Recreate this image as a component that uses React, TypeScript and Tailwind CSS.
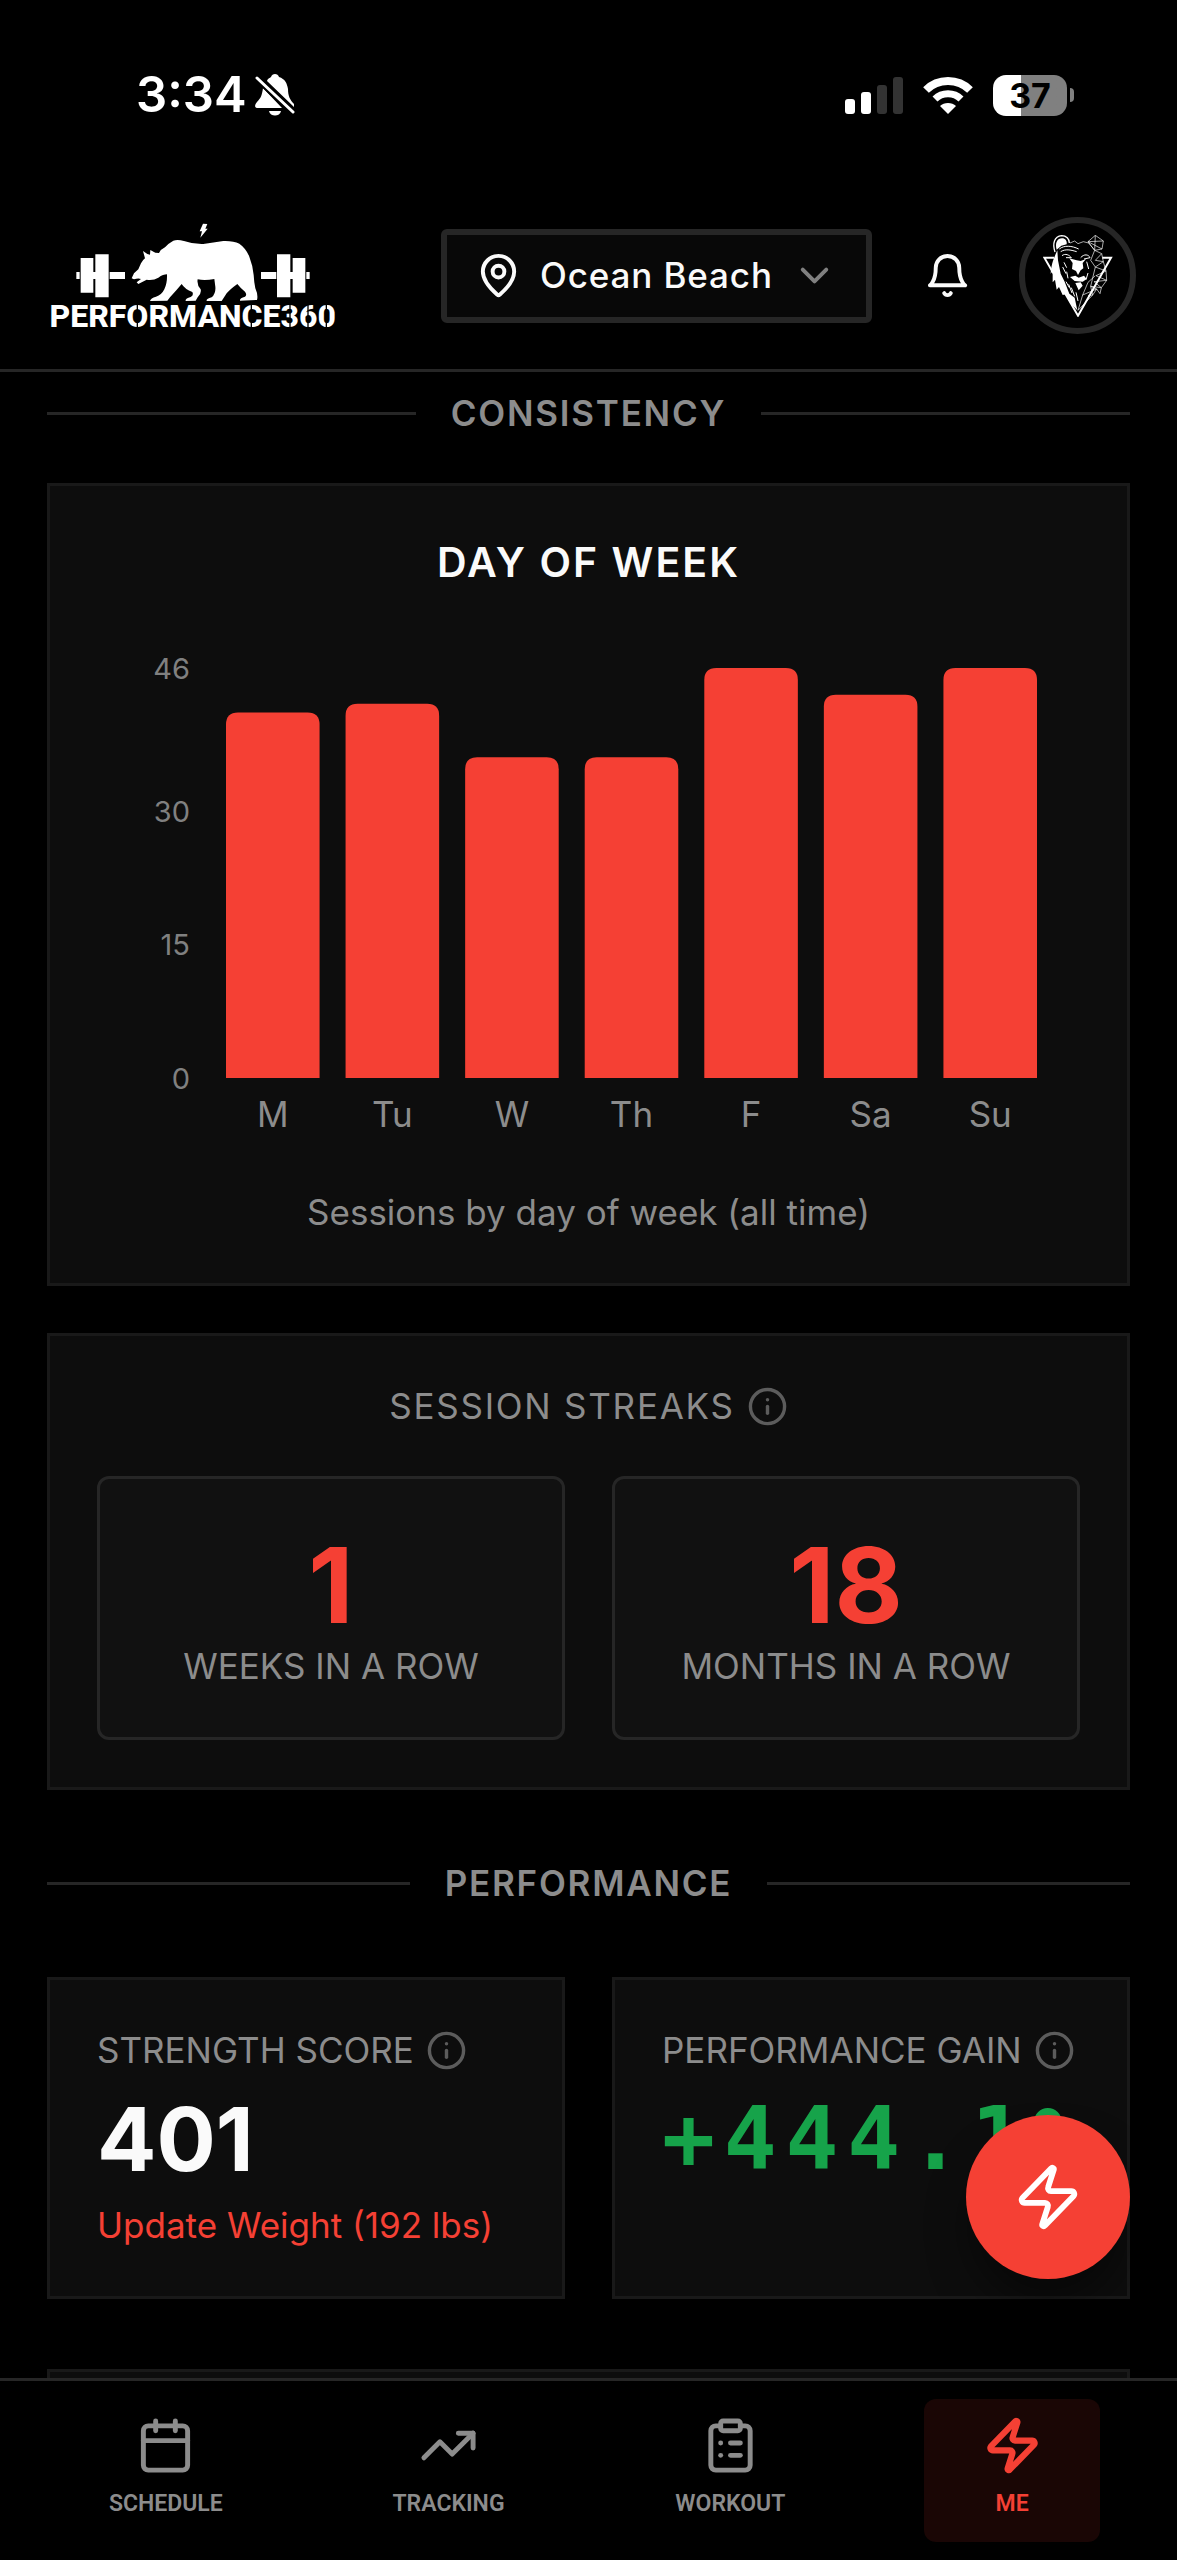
import React from 'react';
import { Calendar, ChevronDown, ClipboardList, Info, MapPin, TrendingUp, Zap } from 'lucide-react';

const sessionsByDay = [
  { day: 'M', count: 41 },
  { day: 'Tu', count: 42 },
  { day: 'W', count: 36 },
  { day: 'Th', count: 36 },
  { day: 'F', count: 46 },
  { day: 'Sa', count: 43 },
  { day: 'Su', count: 46 },
];

const navItems = [
  { label: 'SCHEDULE', icon: Calendar, active: false },
  { label: 'TRACKING', icon: TrendingUp, active: false },
  { label: 'WORKOUT', icon: ClipboardList, active: false },
  { label: 'ME', icon: Zap, active: true },
];

const StatusBar = () => (
  <div className="flex h-[190px] items-center justify-between pl-[136px] pr-[103px]">
    <div className="flex items-center gap-2">
      <span className="text-[49px] leading-[58px] font-semibold text-white">3:34</span>
      <svg width="40" height="42" viewBox="0 0 40 42" fill="#fff" aria-hidden="true">
        <path d="M12 7 C13 4 15 4 16 3 C17 -1 23 -1 24 3 C30 5 32 9 33 15 C33 22 35 26 39 30 L39 33 Z" />
        <path d="M8 14 L27 34 H2 C-1 34 0 30 2 28 C6 24 7 21 8 14 Z" />
        <path d="M14 37 H26 C25 43 15 43 14 37 Z" />
        <path d="M1 3 L39 39" stroke="#000" strokeWidth="7" />
        <path d="M2 4 L38 38" stroke="#fff" strokeWidth="3" strokeLinecap="round" />
      </svg>
    </div>
    <div className="flex items-center gap-5">
      <svg width="58" height="37" viewBox="0 0 58 37" aria-hidden="true">
        <rect x="0" y="22" width="10" height="15" rx="3" fill="#fff" />
        <rect x="16" y="15" width="10" height="22" rx="3" fill="#fff" />
        <rect x="32" y="8" width="10" height="29" rx="3" fill="#333" />
        <rect x="48" y="0" width="10" height="37" rx="3" fill="#333" />
      </svg>
      <svg width="50" height="37" viewBox="0 0 50 37" fill="none" stroke="#fff" aria-hidden="true">
        <path d="M3 13 C15 1 35 1 47 13" strokeWidth="8" />
        <path d="M12 22 C19 15 31 15 38 22" strokeWidth="7" />
        <path d="M25 37 L17 29 C21 25 29 25 33 29 Z" fill="#fff" stroke="none" />
      </svg>
      <div className="flex items-center gap-[3px]">
        <div className="flex h-[41px] w-[74px] items-center justify-center rounded-[13px] bg-linear-to-r from-white from-38% to-[#808080] to-38%">
          <span className="text-[34px] leading-[41px] font-bold text-black">37</span>
        </div>
        <div className="h-[14px] w-1 rounded-r-full bg-[#808080]" />
      </div>
    </div>
  </div>
);

const Logo = () => (
  <svg className="h-[106px] w-[292px] shrink-0 overflow-visible" viewBox="51 39 876 318" fill="#fff" role="img" aria-label="Performance360">
    <path d="M519 41 L532 42 L526 56 L533 56 L511 83 L516 64 L509 64 Z" />
    <path d="M305 205 L312 190 L325 178 L333 160 Q338 150 345 145 L339 123 L352 132 L360 134 L361 120 L376 128 L387 129 Q392 118 405 112 Q415 100 430 92 Q442 87 462 93 Q490 103 520 102 Q550 97 580 93 Q610 92 628 101 Q648 115 658 140 Q668 165 671 195 Q672 215 676 235 Q685 255 681 270 L630 272 Q628 264 645 260 Q652 255 645 245 Q632 235 622 222 Q600 238 590 250 L575 273 L530 273 Q528 266 545 262 Q558 250 556 230 L553 207 Q525 212 503 208 Q500 225 512 238 Q515 250 503 262 L497 272 L467 273 Q465 265 482 261 Q492 255 487 246 Q465 238 455 222 Q440 240 420 262 L412 272 L360 273 Q362 264 378 260 Q395 255 403 238 Q412 220 411 193 Q400 193 385 203 Q370 212 350 209 Q338 215 325 222 L320 217 L333 207 Q325 203 312 208 Z" />
    <path d="M139 186h10v21h-10z M152 144h38v104h-38z M196 133h40v129h-40z M190 186h6v21h-6z M239 186h46v21h-46z" />
    <path d="M693 186h46v21h-46z M741 133h40v129h-40z M788 144h38v104h-38z M781 186h7v21h-7z M829 186h10v21h-10z" />
    <text x="488" y="352" textAnchor="middle" fontSize="96" fontWeight="800" className="font-['Roboto',sans-serif]">
      PERFORMANCE360
    </text>
    {/* stencil cuts in the round letters */}
    <path d="M322 278v80 M664 278v80 M780 278v80 M834 278v80 M889 278v80" stroke="#000" strokeWidth="4" />
  </svg>
);

const BearAvatar = () => (
  <svg className="h-[82px] w-[70px]" viewBox="127 74 210 246" fill="none" stroke="#fff" aria-hidden="true">
    <path d="M160 142 H131 L232 316 L331 142 H305" strokeWidth="6" />
    <path d="M163 125 C155 100 160 78 183 76 C197 76 206 86 206 98" strokeWidth="4" />
    <path d="M168 118 C162 98 170 84 184 84 C194 84 200 92 198 102 L182 106 Z" fill="#fff" stroke="none" />
    <path d="M262 94 L284 75 L308 92 L304 116 L282 120 Z M284 75 L282 120 M262 94 L308 92 M304 116 L262 94" strokeWidth="2" />
    <path d="M208 98 L222 92 L232 100 L248 94 L264 98 L282 120 L303 130 L308 154 L316 182 L318 210 L302 232 L298 250 L288 236 L276 254 L262 256" strokeWidth="2" />
    <path d="M170 120 C158 146 152 162 150 190 L156 182 L156 216 L163 208 L168 238 L175 230 L186 254 L196 252 L212 282 L230 300 L222 262 L206 250 L192 214 L180 190 L172 150 Z" fill="#fff" stroke="none" />
    <path d="M176 116 C190 104 214 106 234 116 M180 124 C196 114 214 120 228 124 M184 136 C194 128 206 134 212 142 L196 142 M240 142 C250 130 264 132 268 142 L250 146" strokeWidth="3" />
    <path d="M206 144 L216 158 L214 176 L226 182 L232 194 L240 180 L248 174 L246 158 L256 146 L240 152 L228 150 Z" fill="#fff" stroke="none" />
    <path d="M208 200 L224 196 L234 202 L250 196 L258 206 L246 214 L222 212 Z M224 218 L240 216 L246 226 L234 240 Z" fill="#fff" stroke="none" />
    <path d="M190 156 L198 172 M186 170 L196 190 M198 184 L202 204 M196 214 L206 232 M204 222 L214 248 M212 232 L222 258 M226 246 L232 272 M258 154 L264 176 M262 188 L256 208" strokeWidth="3" />
    <path d="M282 120 L270 150 L284 170 L316 182 L286 196 L318 210 L280 214 L302 232 L270 228 L288 236 L246 254 L232 300 L276 254 L270 228 L284 170 L308 154 L284 150 L303 130 M284 196 L262 216 L246 254" strokeWidth="2" />
  </svg>
);

const BellIcon = () => (
  <svg className="size-[47px]" viewBox="0 0 24 24" fill="none" stroke="currentColor" strokeWidth="2" strokeLinecap="round" strokeLinejoin="round" aria-hidden="true">
    <path d="M6 8a6 6 0 0 1 12 0c0 7 3 9 3 9H3s3-2 3-9" />
    <path d="M10.3 21a1.94 1.94 0 0 0 3.4 0" />
  </svg>
);

const Header = () => (
  <header className="shrink-0 border-b-[3px] border-neutral-800 bg-black">
    <StatusBar />
    <div className="flex items-center gap-6 pt-[27px] pr-[41px] pb-[35px] pl-[47px]">
      <Logo />
      <label className="ml-auto flex h-[94px] items-center gap-[18px] rounded-md border-[6px] border-neutral-800 bg-[#080808] px-7">
        <MapPin className="size-[47px] text-neutral-50" />
        <select aria-label="Location" className="appearance-none bg-transparent text-[35px] leading-[47px] font-medium tracking-wide text-neutral-50 outline-none">
          <option>Ocean Beach</option>
        </select>
        <ChevronDown className="size-[47px] text-[#808080]" />
      </label>
      <button type="button" aria-label="Notifications" className="py-6 pr-6 pl-7 text-neutral-50">
        <BellIcon />
      </button>
      <button type="button" aria-label="Profile" className="flex size-[117px] items-center justify-center rounded-full border-[6px] border-neutral-800 bg-black">
        <BearAvatar />
      </button>
    </div>
  </header>
);

const SectionHeading = ({ children }: { children: React.ReactNode }) => (
  <div className="flex items-center gap-[35px]">
    <div className="h-[3px] flex-1 bg-neutral-800" />
    <h2 className="text-[35px] leading-[47px] font-semibold tracking-wider text-[#8c8c8c]">{children}</h2>
    <div className="h-[3px] flex-1 bg-neutral-800" />
  </div>
);

const Card = ({ children }: { children?: React.ReactNode }) => (
  <div className="border-[3px] border-[#191919] bg-[#0d0d0d] p-[47px]">{children}</div>
);

const InfoButton = ({ label }: { label: string }) => (
  <button type="button" aria-label={label} className="text-[#5c5c5c]">
    <Info className="size-[41px]" />
  </button>
);

const DayOfWeekChart = () => {
  const max = 46;
  const plotLeft = 116;
  const baseline = 487;
  const plotHeight = 410;
  const slot = 837 / sessionsByDay.length;

  return (
    <svg className="block w-full" viewBox="0 0 983 598" role="img" aria-label="Sessions by day of week">
      {[46, 30, 15, 0].map((tick) => (
        <text key={tick} x="93" y={baseline + 11 - (tick / max) * plotHeight} textAnchor="end" fontSize="29" fill="#808080">
          {tick}
        </text>
      ))}
      {sessionsByDay.map(({ day, count }, index) => {
        const height = (count / max) * plotHeight;
        const left = plotLeft + slot * index + 13;
        const width = slot - 26;
        return (
          <g key={day}>
            <path
              d={`M${left} ${baseline} v${12 - height} q0 -12 12 -12 h${width - 24} q12 0 12 12 v${height - 12} z`}
              fill="#f54034"
            />
            <text x={left + width / 2} y="536" textAnchor="middle" fontSize="35" fill="#8c8c8c">
              {day}
            </text>
          </g>
        );
      })}
    </svg>
  );
};

const StreakTile = ({ value, label }: { value: number; label: string }) => (
  <div className="rounded-xl border-[3px] border-neutral-800 bg-[#111] p-[47px] text-center">
    <p className="text-[105px] leading-[117px] font-bold text-[#f54034]">{value}</p>
    <p className="text-[35px] leading-[47px] whitespace-nowrap text-[#8c8c8c]">{label}</p>
  </div>
);

const BottomNav = () => (
  <nav className="flex shrink-0 justify-around border-t-[3px] border-neutral-800 bg-black px-6 py-[18px]">
    {navItems.map(({ label, icon: Icon, active }) => (
      <a
        key={label}
        href={`#${label.toLowerCase()}`}
        className={`flex min-w-[176px] flex-col items-center rounded-xl px-8 py-[17px] ${active ? 'bg-[#1a0605] text-[#f54034]' : 'text-[#8c8c8c]'}`}
      >
        <Icon className="size-[59px]" strokeWidth={active ? 2.5 : 2} />
        <span className="mt-2 text-[23px] leading-[42px] font-semibold font-['Roboto',sans-serif]">{label}</span>
      </a>
    ))}
  </nav>
);

const App = () => (
  <div className="flex h-screen flex-col bg-black font-['Inter',sans-serif] antialiased">
    <Header />

    <main className="relative flex min-h-0 flex-1 flex-col">
      <div className="min-h-0 flex-1 overflow-y-auto px-[47px] pt-[18px] [scrollbar-width:none]">
        <SectionHeading>CONSISTENCY</SectionHeading>
        <div className="mt-[46px] flex flex-col gap-[47px]">
          <Card>
            <h3 className="text-center text-[41px] leading-[58px] font-semibold tracking-wider text-neutral-50">DAY OF WEEK</h3>
            <DayOfWeekChart />
            <p className="text-center text-[35px] leading-[47px] text-[#8c8c8c]">Sessions by day of week (all time)</p>
          </Card>
          <Card>
            <div className="flex items-center justify-center gap-3">
              <h3 className="text-[35px] leading-[47px] tracking-wider text-[#8c8c8c]">SESSION STREAKS</h3>
              <InfoButton label="About session streaks" />
            </div>
            <div className="mt-[46px] grid grid-cols-2 gap-[47px]">
              <StreakTile value={1} label="WEEKS IN A ROW" />
              <StreakTile value={18} label="MONTHS IN A ROW" />
            </div>
          </Card>
        </div>

        <div className="mt-[70px] flex flex-col gap-[70px]">
          <SectionHeading>PERFORMANCE</SectionHeading>
          <div className="grid grid-cols-2 gap-[47px]">
            <Card>
              <div className="flex items-center gap-3">
                <h3 className="text-[35px] leading-[47px] whitespace-nowrap text-[#8c8c8c]">STRENGTH SCORE</h3>
                <InfoButton label="About strength score" />
              </div>
              <p className="mt-3 text-[88px] leading-[106px] font-bold text-neutral-50">401</p>
              <button type="button" className="mt-[10px] block text-[35px] leading-[47px] whitespace-nowrap text-[#f54034]">
                Update Weight (192 lbs)
              </button>
            </Card>
            <Card>
              <div className="flex items-center gap-3">
                <h3 className="text-[35px] leading-[47px] whitespace-nowrap text-[#8c8c8c]">PERFORMANCE GAIN</h3>
                <InfoButton label="About performance gain" />
              </div>
              <p className="mt-3 text-[88px] leading-[106px] font-bold tracking-widest text-[#16a34a] font-['DejaVu_Sans_Mono',monospace]">
                +444.1%
              </p>
            </Card>
          </div>
          <Card />
        </div>
      </div>

      <button
        type="button"
        aria-label="Quick start"
        className="absolute right-[47px] bottom-[99px] flex size-[164px] items-center justify-center rounded-full bg-[#f54034] text-white shadow-[0_30px_45px_-9px_rgba(0,0,0,0.5)]"
      >
        <Zap className="size-[70px]" />
      </button>
    </main>

    <BottomNav />
  </div>
);

export default App;
